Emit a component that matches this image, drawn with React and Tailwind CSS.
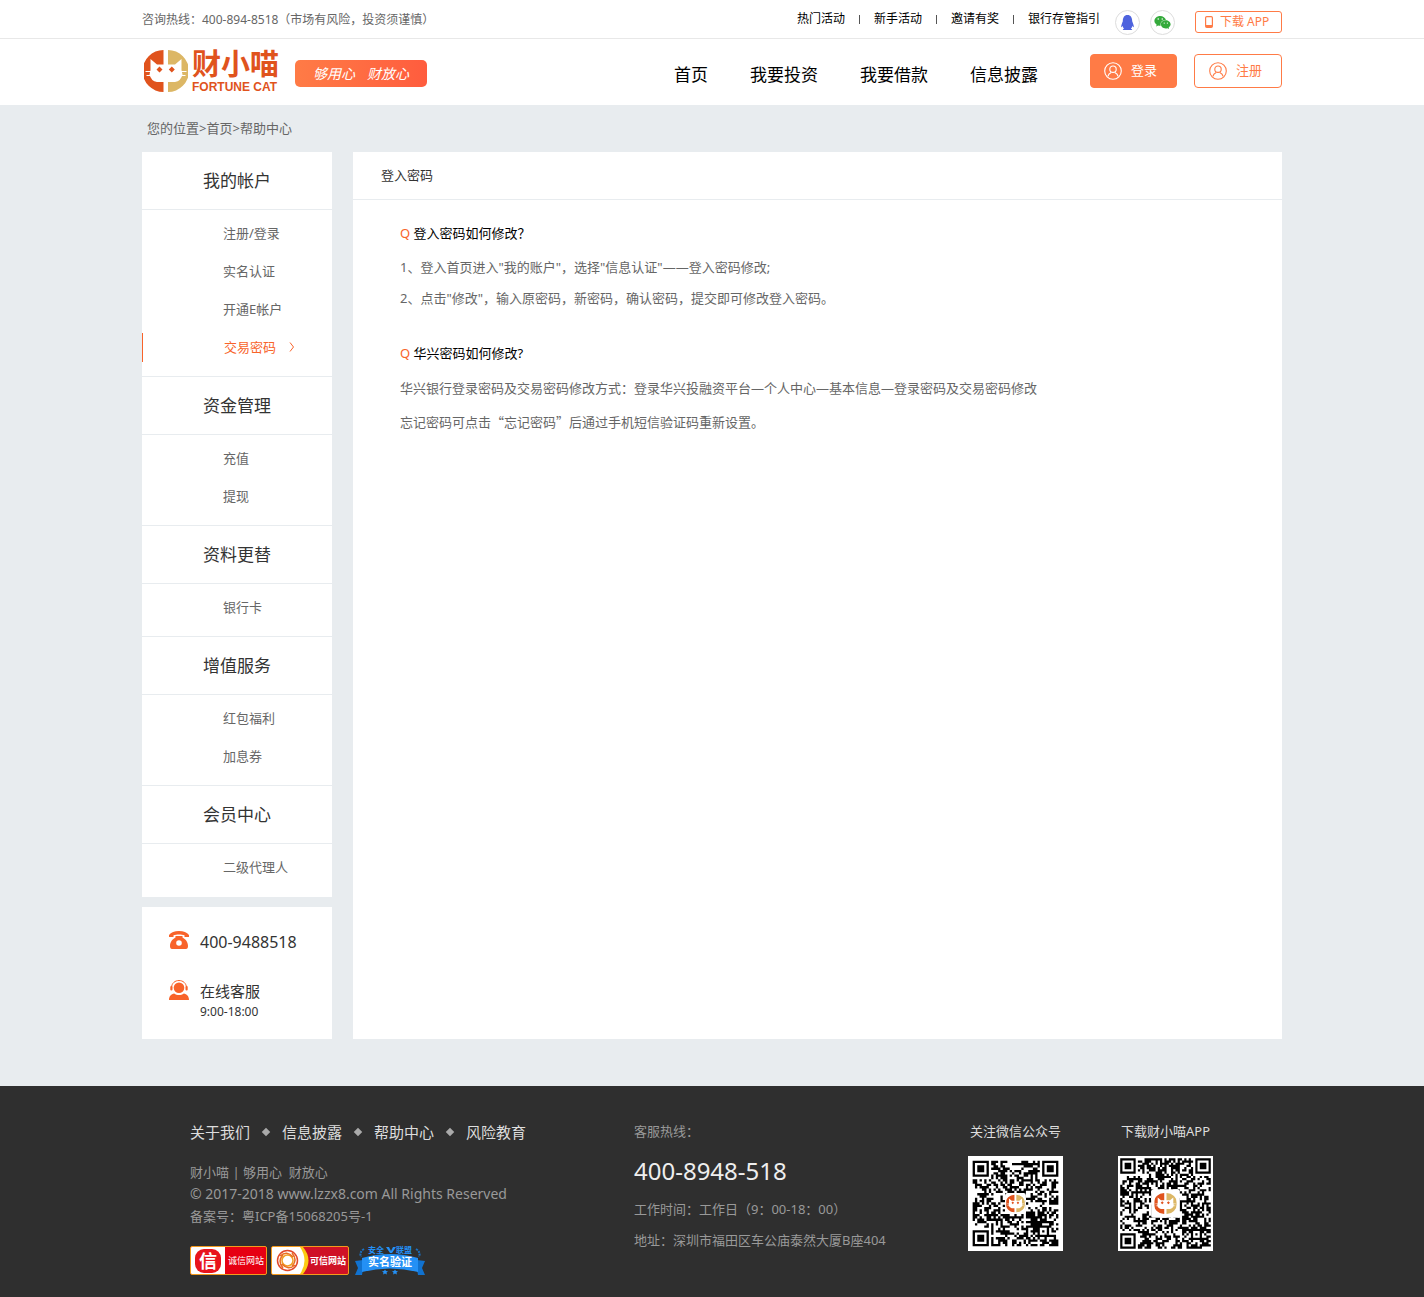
import React from "react";
import { FaQq, FaWeixin } from "react-icons/fa";

const topLinks = ["热门活动", "新手活动", "邀请有奖", "银行存管指引"];
const navLinks = ["首页", "我要投资", "我要借款", "信息披露"];
const groups = [
  { title: "我的帐户", items: ["注册/登录", "实名认证", "开通E帐户", "交易密码"] },
  { title: "资金管理", items: ["充值", "提现"] },
  { title: "资料更替", items: ["银行卡"] },
  { title: "增值服务", items: ["红包福利", "加息券"] },
  { title: "会员中心", items: ["二级代理人"] },
];
const activeItem = "交易密码";
const footerLinks = ["关于我们", "信息披露", "帮助中心", "风险教育"];

function CatMark({ className, ...rest }) {
  return (
    <svg viewBox="0 0 44 42" className={className} aria-hidden="true" {...rest}>
      <path d="M19.500 0A21 21 0 0 0 19.500 42V32H13Q7 31 5.500 24.500L6.500 20V9L13 14.500H19.500Z" fill="#e0531d" />
      <path d="M24 0A21 21 0 0 1 24 42V32H31Q37 31 38.500 24.500L37.500 20V9L31 14.500H24Z" fill="#dcb765" />
      <path d="M1.500 21.500H9M2.500 25.500H9M35 21.500H42.500M35 25.500H41.500" stroke="#fff" strokeWidth="1" />
      <path d="M15.500 16.500l3 3-3 3-3-3zM27.800 16.500l3 3-3 3-3-3z" fill="#e0531d" />
    </svg>
  );
}

function UserCircle() {
  return (
    <svg viewBox="0 0 18 18" className="size-[18px]" fill="none" stroke="currentColor" strokeWidth="1.1" aria-hidden="true">
      <circle cx="9" cy="9" r="8.300" />
      <circle cx="9" cy="7.200" r="3.200" />
      <path d="M3.900 14.400C4.300 12 5.700 11 7.200 10.400M14.100 14.400C13.700 12 12.300 11 10.800 10.400" />
    </svg>
  );
}

function qrCells(size, seed) {
  let s = seed;
  const next = () => {
    s = (s * 1103515245 + 12345) % 2147483648;
    return s / 2147483648;
  };
  const finder = (x, y) => {
    const ring = Math.max(Math.abs(x - 3), Math.abs(y - 3));
    return ring === 3 || ring <= 1;
  };
  let d = "";
  for (let y = 0; y < size; y++) {
    for (let x = 0; x < size; x++) {
      let on = next() > 0.47;
      const left = x < 8;
      const right = x >= size - 8;
      const top = y < 8;
      const bottom = y >= size - 8;
      if (left && top) on = x < 7 && y < 7 && finder(x, y);
      else if (right && top) on = x > size - 8 && y < 7 && finder(x - size + 7, y);
      else if (left && bottom) on = x < 7 && y > size - 8 && finder(x, y - size + 7);
      else {
        const a = Math.max(Math.abs(x - size + 7), Math.abs(y - size + 7));
        if (a <= 2) on = a !== 1;
      }
      if (on) d += `M${x} ${y}h1v1h-1z`;
    }
  }
  return d;
}

function QrCode({ size, seed, margin, hole, mark, label }) {
  const full = size + margin * 2;
  const start = size / 2 - hole / 2;
  const markStart = size / 2 - mark / 2;
  return (
    <svg viewBox={`${-margin} ${-margin} ${full} ${full}`} className="size-[95px] bg-white" role="img" aria-label={label}>
      <path d={qrCells(size, seed)} fill="#000" />
      <rect x={start} y={start} width={hole} height={hole} rx="1" fill="#fff" />
      <CatMark x={markStart} y={markStart} width={mark} height={mark} />
    </svg>
  );
}

function TopBar() {
  return (
    <div className="border-b border-[#e8e8e8] bg-white">
      <div className="mx-auto flex h-[38px] w-full max-w-[1140px] items-start justify-between text-xs">
        <p className="pt-[11px] leading-[18px] text-[#666]">咨询热线：400-894-8518（市场有风险，投资须谨慎）</p>
        <div className="flex items-start">
          <ul className="flex items-center pt-[10px] leading-[18px] text-black">
            {topLinks.map((t, i) => (
              <li key={t} className="flex items-center">
                {i > 0 && <span className="mx-[14px] h-[9px] w-px bg-[#555]" />}
                <a href="#">{t}</a>
              </li>
            ))}
          </ul>
          <a href="#" aria-label="QQ" className="mt-[10px] ml-[15px] flex size-[25px] items-center justify-center rounded-full border border-[#ddd] text-[#4e63de]">
            <FaQq size={15} />
          </a>
          <a href="#" aria-label="微信" className="mt-[10px] ml-[10px] flex size-[25px] items-center justify-center rounded-full border border-[#ddd] text-[#35aa3c]">
            <FaWeixin size={17} />
          </a>
          <a href="#" className="mt-[11px] ml-5 flex h-[22px] w-[87px] items-center rounded-[3px] border border-[#ff7b46] pl-[9px] text-[#ff7b46]">
            <svg viewBox="0 0 8 12" className="mr-[7px] h-3 w-2" aria-hidden="true">
              <rect x=".6" y=".6" width="6.800" height="10.800" rx="1.200" fill="none" stroke="currentColor" strokeWidth="1.200" />
              <path d="M1 9h6v2H1z" fill="currentColor" />
            </svg>
            下载 APP
          </a>
        </div>
      </div>
    </div>
  );
}

function Header() {
  return (
    <header className="bg-white">
      <div className="mx-auto flex h-[66px] w-full max-w-[1140px] items-start">
        <a href="#" className="mt-[11px] ml-[2px] flex text-[#e0531d]">
          <CatMark className="h-[42px] w-[44px]" />
          <span className="ml-1 flex flex-col font-['Liberation_Sans','Noto_Sans_CJK_SC',sans-serif] font-bold">
            <span className="text-[29px] leading-[31px]">财小喵</span>
            <span className="text-xs leading-[12px]">FORTUNE CAT</span>
          </span>
        </a>
        <span className="mt-[21px] ml-4 flex h-[27px] w-[132px] items-center justify-center gap-3 rounded-[5px] bg-linear-to-r from-[#ff7b46] to-[#ff5c3e] text-sm text-white italic">
          <span>够用心</span>
          <span>财放心</span>
        </span>
        <nav className="mt-[21px] ml-auto flex gap-[42px] text-[17px] leading-[30px] text-black">
          {navLinks.map((t) => (
            <a key={t} href="#">{t}</a>
          ))}
        </nav>
        <div className="mt-[15px] ml-[52px] flex gap-[17px] text-[13px]">
          <button className="flex h-[34px] w-[87px] items-center gap-[9px] rounded-[4px] border border-[#ff7b46] bg-[#ff7b46] pl-[13px] text-white">
            <UserCircle />
            登录
          </button>
          <button className="flex h-[34px] w-[88px] items-center gap-[9px] rounded-[4px] border border-[#ff7b46] bg-white pl-[14px] text-[#ff7b46]">
            <UserCircle />
            注册
          </button>
        </div>
      </div>
    </header>
  );
}

function Sidebar() {
  return (
    <aside className="flex w-[190px] shrink-0 flex-col gap-[10px]">
      <div className="bg-white pb-px">
        {groups.map((g, gi) => (
          <section key={g.title} className={gi > 0 ? "border-t border-[#e8ecef]" : ""}>
            <h2 className="border-b border-[#e8ecef] text-center text-[17px] leading-[57px] text-[#333]">{g.title}</h2>
            <ul className="pt-1 pb-[10px] text-[13px] leading-[38px] text-[#666]">
              {g.items.map((t) =>
                t === activeItem ? (
                  <li key={t} className="flex h-[38px] items-center text-[#f8632a]">
                    <span className="h-[29px] w-px bg-[#f8632a]" />
                    <a href="#" className="flex items-center gap-[13px] pl-[81px]">
                      {t}
                      <svg viewBox="0 0 6 10" className="h-[10px] w-[6px]" fill="none" stroke="currentColor" aria-hidden="true">
                        <path d="M1 .5L4.500 5 1 9.500" />
                      </svg>
                    </a>
                  </li>
                ) : (
                  <li key={t} className="pl-[81px]">
                    <a href="#">{t}</a>
                  </li>
                )
              )}
            </ul>
          </section>
        ))}
      </div>
      <div className="grow bg-white pt-[23px] pb-[17px] pl-[27px] text-[#333]">
        <div className="flex items-start gap-[11px]">
          <svg viewBox="0 0 20 18" className="mt-px h-[18px] w-5" fill="#f8632a" aria-hidden="true">
            <path d="M0 6V4C2 1.300 5.500 0 10 0s8 1.300 10 4v2h-4.500V4.300C14 3.600 12 3.400 10 3.400s-4 .2-5.500.9V6z" />
            <path fillRule="evenodd" d="M6.500 5h7v1.500C16.500 8 19 11 19 15c0 2-.7 3-2 3H3c-1.300 0-2-1-2-3 0-4 2.500-7 5.500-8.500zM10 9.200a2.800 2.800 0 1 0 0 5.600 2.800 2.800 0 0 0 0-5.600z" />
          </svg>
          <span className="text-base leading-6">400-9488518</span>
        </div>
        <div className="mt-[26px] flex items-start gap-[11px]">
          <svg viewBox="0 0 20 20" className="h-5 w-5" fill="#f8632a" aria-hidden="true">
            <circle cx="10" cy="7.800" r="5.300" />
            <path d="M2.500 8C2.500-2 17.500-2 17.500 8" fill="none" stroke="#f8632a" strokeWidth="1" />
            <rect x="1.300" y="6" width="2.200" height="4.500" rx="1" />
            <rect x="16.500" y="6" width="2.200" height="4.500" rx="1" />
            <path d="M0 20c0-4 2.300-5.800 5.200-6.500C8 15.500 12 15.500 14.800 13.500 17.700 14.200 20 16 20 20z" />
          </svg>
          <div>
            <p className="text-[15px] leading-[22px]">在线客服</p>
            <p className="text-xs leading-[20px]">9:00-18:00</p>
          </div>
        </div>
      </div>
    </aside>
  );
}

function Question({ children }) {
  return (
    <h3 className="text-[13px] leading-[30px] text-black">
      <span className="text-[#f8632a]">Q</span> {children}
    </h3>
  );
}

function Main() {
  return (
    <main className="bg-[#e8ecef] pb-[47px]">
      <div className="mx-auto w-full max-w-[1140px]">
        <p className="pl-[5px] text-[13px] leading-[47px] text-[#666]">
          您的位置&gt;<a href="#">首页</a>&gt;<a href="#">帮助中心</a>
        </p>
        <div className="flex gap-[21px]">
          <Sidebar />
          <article className="min-w-0 grow bg-white">
            <h1 className="border-b border-[#e8ecef] pl-7 text-[13px] leading-[47px] text-[#333]">登入密码</h1>
            <div className="px-[47px] pt-[18px] text-[13px] text-[#666]">
              <Question>登入密码如何修改？</Question>
              <p className="mt-1 leading-[31px]">1、登入首页进入"我的账户"，选择"信息认证"——登入密码修改;</p>
              <p className="leading-[31px]">2、点击"修改"，输入原密码，新密码，确认密码，提交即可修改登入密码。</p>
              <div className="mt-6">
                <Question>华兴密码如何修改?</Question>
              </div>
              <p className="mt-[3px] leading-[34px]">华兴银行登录密码及交易密码修改方式：登录华兴投融资平台—个人中心—基本信息—登录密码及交易密码修改</p>
              <p className="font-['Noto_Sans_CJK_SC',sans-serif] leading-[34px]">忘记密码可点击“忘记密码”后通过手机短信验证码重新设置。</p>
            </div>
          </article>
        </div>
      </div>
    </main>
  );
}

function Badges() {
  return (
    <div className="mt-[19px] flex h-[29px] items-center">
      <a href="#" className="flex h-[29px] w-[77px] items-center overflow-hidden rounded-[2px] border border-[#f39a1c] bg-[#e60012] text-white">
        <span className="flex h-full w-[34px] shrink-0 items-center justify-center bg-white">
          <span className="flex h-[24px] w-[26px] items-center justify-center rounded-[9px] bg-[#e8141c] text-[18px] leading-none font-bold">信</span>
        </span>
        <span className="pl-[3px] text-[9px] whitespace-nowrap">诚信网站</span>
      </a>
      <a href="#" className="ml-1 flex h-[29px] w-[78px] items-center overflow-hidden rounded-[2px] border border-[#f39a1c] bg-[#cf1126] text-white">
        <svg viewBox="0 0 38 27" className="h-[27px] w-[38px] shrink-0" aria-hidden="true">
          <path d="M0 0H31Q42 13.500 31 27H0z" fill="#fccb13" />
          <path d="M0 0H28Q37 13.500 28 27H0z" fill="#fff" />
          <g fill="none" strokeWidth="1.500">
            <circle cx="15.500" cy="13.500" r="10" stroke="#e2492b" />
            <circle cx="15.500" cy="13.500" r="5.500" stroke="#f0a024" />
            <path d="M8 9q7-6 13 1M20 6q6 7 0 13M23 18q-7 6-13-1M11 21q-6-7 0-13" stroke="#ea6f22" />
          </g>
        </svg>
        <span className="text-[9px] font-bold whitespace-nowrap">可信网站</span>
      </a>
      <a href="#" className="ml-[6px] grid h-[29px] w-[70px] grid-cols-1 grid-rows-1">
        <svg viewBox="0 0 70 29" className="col-start-1 row-start-1 h-[29px] w-[70px]" aria-hidden="true">
          <path d="M0 15l8-1v9l-1 6H0l3-7zM70 15l-8-1v9l1 6h7l-3-7z" fill="#1172cf" />
          <path d="M7 12Q35 4 63 12V26Q35 19 7 26z" fill="#2490f5" />
          <path d="M31 1h3l2 4 2-4h3l-4 6h-2z" fill="#2490f5" />
          <path d="M9 3q-5 3-3 8M61 3q5 3 3 8" fill="none" stroke="#1b72c4" strokeWidth="2" strokeDasharray="2 1" />
          <path d="M30 23.500l1 1.500 2 .2-1.500 1.300.4 2-1.900-1-1.900 1 .4-2-1.500-1.300 2-.2zM40 23.500l1 1.500 2 .2-1.500 1.300.4 2-1.900-1-1.900 1 .4-2-1.500-1.300 2-.2z" fill="#2490f5" />
        </svg>
        <span className="col-start-1 row-start-1 flex flex-col items-center whitespace-nowrap">
          <span className="flex gap-3 text-[8px] leading-[8px] font-bold text-[#2490f5]">
            <span>安全</span>
            <span>联盟</span>
          </span>
          <span className="text-[11px] leading-[16px] font-bold text-white">实名验证</span>
        </span>
      </a>
    </div>
  );
}

function Footer() {
  return (
    <footer className="bg-[#2f2f2f]">
      <div className="mx-auto grid w-full max-w-[1140px] grid-cols-[444px_1fr_auto_auto] pt-[34px] pr-[69px] pb-[22px] pl-12 text-[13px] text-[#999]">
        <div>
          <ul className="flex text-[15px] leading-[24px] text-[#ddd]">
            {footerLinks.map((t, i) => (
              <li key={t} className="flex items-center">
                {i > 0 && <span className="mx-[13px] size-[6px] rotate-45 bg-[#aaa]" />}
                <a href="#">{t}</a>
              </li>
            ))}
          </ul>
          <div className="mt-[17px] leading-[22px]">
            <p className="whitespace-pre">财小喵 | 够用心  财放心</p>
            <p className="text-sm leading-[22px]">© 2017-2018 www.lzzx8.com All Rights Reserved</p>
            <p>备案号：粤ICP备15068205号-1</p>
          </div>
          <Badges />
        </div>
        <div>
          <p className="leading-[22px]">客服热线：</p>
          <p className="mt-3 text-2xl leading-[34px] text-[#eee]">400-8948-518</p>
          <p className="mt-[6px] leading-[31px]">工作时间：工作日（9：00-18：00）</p>
          <p className="leading-[31px]">地址：深圳市福田区车公庙泰然大厦B座404</p>
        </div>
        <div className="flex flex-col items-center gap-[14px] text-[#ddd]">
          <p className="leading-[22px]">关注微信公众号</p>
          <QrCode size={37} seed={77} margin={2} hole={9} mark={8} label="微信公众号二维码" />
        </div>
        <div className="ml-[55px] flex flex-col items-center gap-[14px] text-[#ddd]">
          <p className="leading-[22px]">下载财小喵APP</p>
          <QrCode size={41} seed={4211} margin={1} hole={13} mark={10} label="财小喵APP下载二维码" />
        </div>
      </div>
    </footer>
  );
}

export default function App() {
  return (
    <div lang="zh-CN" className="min-w-[1140px] font-['Noto_Sans','Noto_Sans_CJK_SC',sans-serif]">
      <TopBar />
      <Header />
      <Main />
      <Footer />
    </div>
  );
}
